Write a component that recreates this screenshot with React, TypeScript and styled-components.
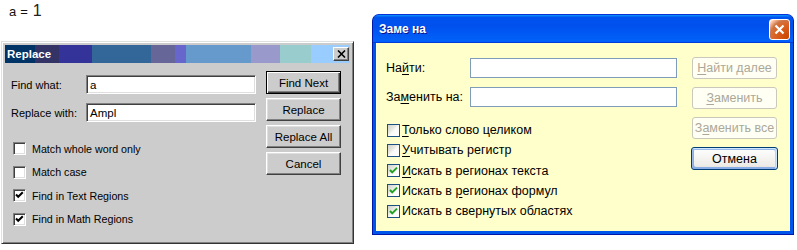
import React from 'react';
import styled, { createGlobalStyle, css } from 'styled-components';

const Global = createGlobalStyle`
  html, body { margin: 0; padding: 0; background: #fff; }
  body { font-family: "Liberation Sans", Arial, sans-serif; }
  * { box-sizing: border-box; }
`;

const Desktop = styled.div`
  position: relative;
  width: 797px;
  height: 250px;
  overflow: hidden;
  background: #fff;
`;

/* ---------- top expression ---------- */
const Expr = styled.div`
  position: absolute;
  left: 9px;
  top: 2px;
  display: flex;
  align-items: baseline;
  gap: 4px;
  color: #111;
  font-family: "Liberation Sans", Arial, sans-serif;
  font-size: 13px;
`;
const ExprNum = styled.span`
  font-size: 16px;
  margin-left: 1px;
  color: #222;
`;

/* ---------- classic window ---------- */
const ClassicWindow = styled.section`
  position: absolute;
  left: 1px;
  top: 41px;
  width: 353px;
  height: 203px;
  background: #cccccc;
  border: 1px solid;
  border-color: #e0e0e0 #333 #333 #e0e0e0;
  box-shadow: inset 1px 1px #fff, inset -1px -1px #808080;
  padding: 3px;
  display: flex;
  flex-direction: column;
  font-family: "Liberation Sans", Arial, sans-serif;
  font-size: 11px;
  color: #000;
`;

const ClassicTitle = styled.header`
  height: 18px;
  display: flex;
  align-items: center;
  justify-content: space-between;
  padding: 0 1px 0 2px;
  background: linear-gradient(
    to right,
    #003366 0 30px,
    #333366 30px 54px,
    #333399 54px 87px,
    #336699 87px 146px,
    #666699 146px 170px,
    #6666cc 170px 181px,
    #6699cc 181px 246px,
    #9999cc 246px 275px,
    #99cccc 275px 306px,
    #99ccff 306px 100%
  );
  color: #fff;
  font-weight: bold;
  font-size: 11.5px;
`;

const ClassicClose = styled.button`
  width: 16px;
  height: 14px;
  padding: 0;
  display: flex;
  align-items: center;
  justify-content: center;
  background: #cccccc;
  border: 1px solid;
  border-color: #fff #404040 #404040 #fff;
  box-shadow: inset -1px -1px #808080;
`;

const ClassicBody = styled.div`
  flex: 1;
  display: flex;
  padding: 8px 0 0 6px;
`;

const ClassicLeft = styled.div`
  display: flex;
  flex-direction: column;
`;

const ClassicForm = styled.div`
  display: grid;
  grid-template-columns: 75px 170px;
  row-gap: 9px;
  align-items: center;
  margin-top: 4px;
`;

const ClassicInput = styled.div`
  height: 19px;
  background: #fff;
  border: 1px solid;
  border-color: #808080 #fff #fff #808080;
  box-shadow: inset 1px 1px #404040, inset -1px -1px #dfdfdf;
  padding: 0 3px;
  display: flex;
  align-items: center;
  font-size: 11.5px;
`;

const ClassicChecks = styled.div`
  display: flex;
  flex-direction: column;
  margin-top: 15px;
`;

const ClassicCheckRow = styled.label`
  height: 23.5px;
  display: flex;
  align-items: center;
  gap: 6px;
  padding-left: 2px;
  font-size: 10.7px;
`;

const ClassicBox = styled.span`
  width: 13px;
  height: 13px;
  background: #fff;
  border: 1px solid;
  border-color: #808080 #fff #fff #808080;
  box-shadow: inset 1px 1px #404040, inset -1px -1px #dfdfdf;
  display: flex;
  align-items: center;
  justify-content: center;
`;

const ClassicButtons = styled.div`
  display: flex;
  flex-direction: column;
  gap: 4px;
  margin-left: 10px;
`;

const ClassicButton = styled.button<{ $default?: boolean }>`
  width: 75px;
  height: 23px;
  padding: 0;
  font-family: "Liberation Sans", Arial, sans-serif;
  font-size: 11.5px;
  color: #000;
  background: #cccccc;
  border: 1px solid;
  border-color: #fff #404040 #404040 #fff;
  box-shadow: inset -1px -1px #808080, inset 1px 1px #dfdfdf;
  ${(p) =>
    p.$default &&
    css`
      border: 1px solid #000;
      box-shadow: inset 1px 1px #fff, inset -1px -1px #404040,
        inset -2px -2px #808080;
    `}
`;

/* ---------- XP window ---------- */
const XPWindow = styled.section`
  position: absolute;
  left: 372px;
  top: 14px;
  width: 422px;
  height: 221px;
  display: flex;
  flex-direction: column;
  background: #0055ea;
  border: 1px solid #0019a8;
  border-top-color: #0831d9;
  border-radius: 7px 7px 0 0;
  font-family: "Liberation Sans", Arial, sans-serif;
  font-size: 12.5px;
  color: #000;
  overflow: hidden;
`;

const XPTitle = styled.header`
  height: 28px;
  display: flex;
  align-items: center;
  justify-content: space-between;
  padding: 0 3px 0 6px;
  background: linear-gradient(
    180deg,
    #0997ff,
    #0053ee 8%,
    #0050ee 40%,
    #0060f8 88%,
    #0060f8 93%,
    #005bff 95%,
    #003dd7 96%,
    #003dd7
  );
  color: #fff;
  font-weight: bold;
  font-size: 12px;
  text-shadow: 1px 1px #0f1089;
`;

const XPClose = styled.button`
  width: 21px;
  height: 21px;
  padding: 0;
  display: flex;
  align-items: center;
  justify-content: center;
  border: 1px solid #fff;
  border-radius: 3px;
  background: radial-gradient(
    circle at 90% 90%,
    #cc4600 0,
    #dc6527 55%,
    #cd7546 70%,
    #ffccb2 90%,
    #fff 100%
  );
`;

const XPContent = styled.div`
  flex: 1;
  margin: 0 3px 3px;
  background: #ffffcc;
  display: flex;
  padding: 14px 0 0 10px;
`;

const XPLeft = styled.div`
  display: flex;
  flex-direction: column;
`;

const XPForm = styled.div`
  display: grid;
  grid-template-columns: 84px 207px;
  row-gap: 9px;
  align-items: center;
  margin-top: 1px;
`;

const XPInput = styled.div`
  height: 20px;
  background: #fff;
  border: 1px solid #7f9db9;
`;

const XPChecks = styled.div`
  display: flex;
  flex-direction: column;
  margin-top: 13px;
`;

const XPCheckRow = styled.label`
  height: 20.25px;
  display: flex;
  align-items: center;
  gap: 2px;
  padding-left: 1px;
`;

const XPBox = styled.span`
  width: 13px;
  height: 13px;
  border: 1px solid #1c5180;
  background: linear-gradient(135deg, #d2d2cc 0%, #e6e6e0 35%, #fbfbf8 55%, #fff 100%);
  display: flex;
  align-items: center;
  justify-content: center;
`;

const XPButtons = styled.div`
  display: flex;
  flex-direction: column;
  gap: 8px;
  margin-left: 15px;
`;

const XPButton = styled.button<{ $default?: boolean }>`
  width: 85px;
  height: 22px;
  padding: 0;
  font-family: "Liberation Sans", Arial, sans-serif;
  font-size: 12.5px;
  border-radius: 3px;
  border: 1px solid #cac8bb;
  background: #fffff4;
  color: #aca899;
  ${(p) =>
    p.$default &&
    css`
      width: 87px;
      height: 23px;
      margin-left: -1px;
      color: #000;
      border-color: #003c74;
      background: linear-gradient(180deg, #fff, #ecebe6 86%, #d6d0c5);
      box-shadow: inset -1px 1px #cee7ff, inset 1px 2px #98b8ea,
        inset -2px 2px #bcd4f6, inset 1px -1px #89ade4, inset 2px -2px #89ade4;
    `}
`;

const Key = styled.u`
  text-decoration: underline;
  text-underline-offset: 2px;
`;

const ClassicCheck = () => (
  <svg width="9" height="9" viewBox="0 0 9 9">
    <polyline points="1,3.5 3.2,5.8 7.8,1.2" fill="none" stroke="#000" strokeWidth="2" />
  </svg>
);

const XPCheck = () => (
  <svg width="9" height="9" viewBox="0 0 9 9">
    <polyline points="1,4 3.2,6.4 8,1.6" fill="none" stroke="#21a121" strokeWidth="2" />
  </svg>
);

const classicChecks = [
  { label: 'Match whole word only', checked: false },
  { label: 'Match case', checked: false },
  { label: 'Find in Text Regions', checked: true },
  { label: 'Find in Math Regions', checked: true },
];

export default function App() {
  return (
    <Desktop>
      <Global />
      <Expr>
        <span>a</span>
        <span>=</span>
        <ExprNum>1</ExprNum>
      </Expr>

      <ClassicWindow>
        <ClassicTitle>
          <span>Replace</span>
          <ClassicClose aria-label="Close">
            <svg width="9" height="8" viewBox="0 0 9 8">
              <path d="M1 0.5 L8 7.5 M8 0.5 L1 7.5" stroke="#000" strokeWidth="1.6" />
            </svg>
          </ClassicClose>
        </ClassicTitle>
        <ClassicBody>
          <ClassicLeft>
            <ClassicForm>
              <span>Find what:</span>
              <ClassicInput>a</ClassicInput>
              <span>Replace with:</span>
              <ClassicInput>Ampl</ClassicInput>
            </ClassicForm>
            <ClassicChecks>
              {classicChecks.map((c) => (
                <ClassicCheckRow key={c.label}>
                  <ClassicBox>{c.checked && <ClassicCheck />}</ClassicBox>
                  {c.label}
                </ClassicCheckRow>
              ))}
            </ClassicChecks>
          </ClassicLeft>
          <ClassicButtons>
            <ClassicButton $default>Find Next</ClassicButton>
            <ClassicButton>Replace</ClassicButton>
            <ClassicButton>Replace All</ClassicButton>
            <ClassicButton>Cancel</ClassicButton>
          </ClassicButtons>
        </ClassicBody>
      </ClassicWindow>

      <XPWindow>
        <XPTitle>
          <span>Заме на</span>
          <XPClose aria-label="Закрыть">
            <svg width="11" height="11" viewBox="0 0 11 11">
              <path d="M1.5 1.5 L9.5 9.5 M9.5 1.5 L1.5 9.5" stroke="#fff" strokeWidth="2.2" />
            </svg>
          </XPClose>
        </XPTitle>
        <XPContent>
          <XPLeft>
            <XPForm>
              <span>
                На<Key>й</Key>ти:
              </span>
              <XPInput />
              <span>
                За<Key>м</Key>енить на:
              </span>
              <XPInput />
            </XPForm>
            <XPChecks>
              <XPCheckRow>
                <XPBox />
                <span>
                  <Key>Т</Key>олько слово целиком
                </span>
              </XPCheckRow>
              <XPCheckRow>
                <XPBox />
                <span>
                  <Key>У</Key>читывать регистр
                </span>
              </XPCheckRow>
              <XPCheckRow>
                <XPBox>
                  <XPCheck />
                </XPBox>
                <span>
                  <Key>И</Key>скать в регионах текста
                </span>
              </XPCheckRow>
              <XPCheckRow>
                <XPBox>
                  <XPCheck />
                </XPBox>
                <span>
                  Искать в <Key>р</Key>егионах формул
                </span>
              </XPCheckRow>
              <XPCheckRow>
                <XPBox>
                  <XPCheck />
                </XPBox>
                <span>Искать в свернутых областях</span>
              </XPCheckRow>
            </XPChecks>
          </XPLeft>
          <XPButtons>
            <XPButton disabled>
              <Key>Н</Key>айти далее
            </XPButton>
            <XPButton disabled>
              <Key>З</Key>аменить
            </XPButton>
            <XPButton disabled>
              З<Key>а</Key>менить все
            </XPButton>
            <XPButton $default>Отмена</XPButton>
          </XPButtons>
        </XPContent>
      </XPWindow>
    </Desktop>
  );
}
